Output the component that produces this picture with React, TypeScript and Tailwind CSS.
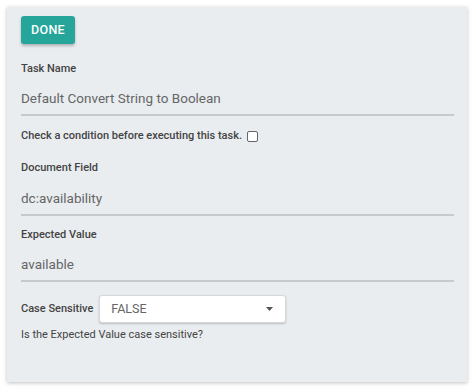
import React from "react";

export default function App() {
  return (
    <div className="w-[475px] h-[390px] bg-white pt-[7px] pl-[7px]" style={{ fontFamily: "Roboto, 'Noto Sans', sans-serif" }}>
      <div className="w-[460px] h-[375px] bg-[#e9edf0] shadow-[0_1px_4px_rgba(0,0,0,0.25)] pl-[14px] pr-[13px] pt-[9px]">
        <button className="h-[28px] w-[54px] rounded-[3px] bg-[#26a69a] text-white text-[12.5px] font-medium tracking-[0.3px] shadow-[0_2px_3px_rgba(0,0,0,0.25)] flex items-center justify-center">
          DONE
        </button>

        <div className="mt-[17px] h-4 text-[11px] leading-4 font-medium text-[#444]">Task Name</div>
        <div className="mt-[9px] pb-[4px] border-b-2 border-[#c7c9cb] text-[13.5px] leading-6 text-[#666]">
          Default Convert String to Boolean
        </div>

        <div className="mt-[12px] h-4 flex items-center text-[11px] leading-4 font-medium text-[#444]">
          <span>Check a condition before executing this task.</span>
          <span className="ml-[5px] w-[11px] h-[11px] rounded-[2px] border border-[#666] bg-white inline-block"></span>
        </div>

        <div className="mt-[16px] h-4 text-[11px] leading-4 font-medium text-[#444]">Document Field</div>
        <div className="mt-[10px] pb-[4px] border-b-2 border-[#c7c9cb] text-[13.5px] leading-6 text-[#666]">
          dc:availability
        </div>

        <div className="mt-[11px] h-4 text-[11px] leading-4 font-medium text-[#444]">Expected Value</div>
        <div className="mt-[9px] pb-[4px] border-b-2 border-[#c7c9cb] text-[13.5px] leading-6 text-[#666]">
          available
        </div>

        <div className="mt-[13px] flex items-center">
          <span className="text-[11px] leading-4 font-medium text-[#444]">Case Sensitive</span>
          <div className="ml-[6px] w-[187px] h-[28px] rounded-[3px] bg-white border border-[#d6d8da] shadow-[0_1px_2px_rgba(0,0,0,0.2)] flex items-center justify-between pl-[11px] pr-[12px]">
            <span className="text-[12.5px] text-[#666]">FALSE</span>
            <svg width="7" height="4" viewBox="0 0 7 4">
              <path d="M0 0 L7 0 L3.5 4 Z" fill="#555" />
            </svg>
          </div>
        </div>

        <div className="mt-[4px] text-[11px] leading-4 text-[#444]">Is the Expected Value case sensitive?</div>
      </div>
    </div>
  );
}
